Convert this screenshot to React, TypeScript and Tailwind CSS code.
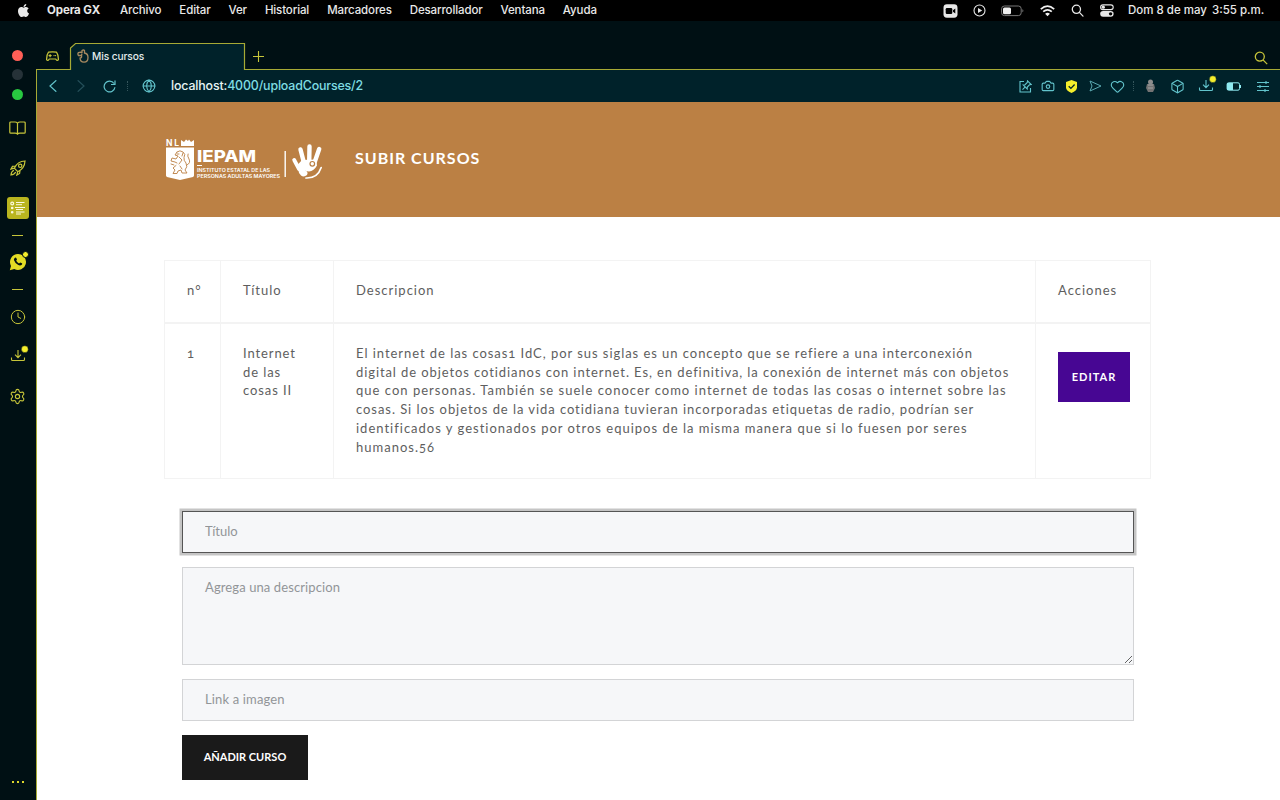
import React from "react";
import {
  Clock, Settings, Camera, Heart, Box, Globe,
} from "lucide-react";
import { FaApple } from "react-icons/fa";

const menus = ["Archivo", "Editar", "Ver", "Historial", "Marcadores", "Desarrollador", "Ventana", "Ayuda"];

const description = [
  { text: "El internet de las cosas1 IdC, por sus siglas es un concepto que se refiere a una interconexión", cls: "tracking-[0.95px]" },
  { text: "digital de objetos cotidianos con internet. Es, en definitiva, la conexión de internet más con objetos", cls: "tracking-[0.91px]" },
  { text: "que con personas. También se suele conocer como internet de todas las cosas o internet sobre las", cls: "tracking-[1.02px]" },
  { text: "cosas. Si los objetos de la vida cotidiana tuvieran incorporadas etiquetas de radio, podrían ser", cls: "tracking-[0.94px]" },
  { text: "identificados y gestionados por otros equipos de la misma manera que si lo fuesen por seres", cls: "tracking-[1px]" },
  { text: "humanos.56", cls: "tracking-[1px]" },
];

function MenuBar() {
  return (
    <header className="flex h-[21px] shrink-0 items-center bg-black text-[11.5px] font-medium leading-none text-[#e8e8e8]">
      <FaApple className="ml-[16px] size-[15px]" />
      <span className="ml-[16px] w-[55px] whitespace-nowrap font-bold tracking-[-0.1px]">Opera GX</span>
      <nav className="ml-[18px] flex gap-[18px] tracking-[-0.12px]">
        {menus.map((m) => <span key={m}>{m}</span>)}
      </nav>
      <div className="ml-auto flex items-center">
        <svg className="h-[14px] w-[15px]" viewBox="0 0 15 14">
          <rect x=".5" y=".3" width="14" height="13.4" rx="3.4" fill="#e8e8e8" />
          <rect x="2.7" y="4" width="6.6" height="6" rx="1.2" fill="#000" />
          <path d="M10 6.2 12.3 4.4v5.2L10 7.8z" fill="#000" />
        </svg>
        <svg className="ml-[15px] size-[13px]" viewBox="0 0 13 13">
          <circle cx="6.5" cy="6.5" r="5.5" fill="none" stroke="#e8e8e8" strokeWidth="1.1" />
          <path d="M5 3.9 9.2 6.5 5 9.1z" fill="#e8e8e8" />
        </svg>
        <svg className="ml-[15px] h-[12px] w-[23px]" viewBox="0 0 23 12">
          <rect x=".6" y="1" width="19.6" height="9.6" rx="2.8" fill="none" stroke="#777" strokeWidth="1" />
          <rect x="2" y="2.4" width="8" height="6.8" rx="1.5" fill="#f0f0f0" />
          <path d="M21.4 4.3q1 .4 1 1.5t-1 1.5z" fill="#777" />
        </svg>
        <svg className="ml-[16px] h-[12px] w-[15px]" viewBox="0 0 15 12" fill="none" stroke="#f0f0f0" strokeWidth="1.7">
          <path d="M.8 4.1Q7.5-1.9 14.2 4.1" />
          <path d="M3.2 6.7Q7.5 2.9 11.8 6.7" />
          <path d="M5.1 8.7Q7.5 6.8 9.9 8.7L7.5 11.3z" fill="#f0f0f0" stroke="none" />
        </svg>
        <svg className="ml-[16px] size-[13px]" viewBox="0 0 13 13" fill="none" stroke="#e8e8e8" strokeWidth="1.3">
          <circle cx="5.4" cy="5.3" r="4.1" /><path d="m8.4 8.4 3.6 3.7" strokeLinecap="round" />
        </svg>
        <svg className="ml-[16px] h-[13px] w-[14px]" viewBox="0 0 14 13">
          <rect x=".6" y=".9" width="12.6" height="4.7" rx="2.35" fill="none" stroke="#e8e8e8" strokeWidth="1.1" />
          <circle cx="3.3" cy="3.2" r="1.6" fill="#e8e8e8" />
          <rect x=".2" y="7" width="13.4" height="5.7" rx="2.85" fill="#e8e8e8" />
          <circle cx="10.6" cy="9.85" r="1.7" fill="#000" />
        </svg>
        <span className="ml-[14px] w-[82px] whitespace-nowrap">Dom 8 de may</span>
        <span className="mr-[16px] ml-[2px] w-[52px] whitespace-nowrap">3:55 p.m.</span>
      </div>
    </header>
  );
}

function TrayDownload({ color, bg }: { color: string; bg: string }) {
  return (
    <svg className="h-[18px] w-[19px] shrink-0" viewBox="0 0 19 18" fill="none" stroke={color} strokeWidth="1.1">
      <path d="M1.5 12.5v2q0 1 1 1h11q1 0 1-1v-2M8 5v7.400M5 9.600l3 3 3-3" />
      <circle cx="14.800" cy="4.200" r="3.400" fill="#f5ee2c" stroke={bg} strokeWidth=".4" />
    </svg>
  );
}

function Sidebar() {
  return (
    <aside className="flex w-[36px] shrink-0 flex-col items-center bg-[#001014] pr-px text-[#c6c53a]">
      <div className="mt-[29px] size-[11px] shrink-0 rounded-full bg-[#ff5f57]" />
      <div className="mt-[8px] size-[11px] shrink-0 rounded-full bg-[#263238]" />
      <div className="mt-[9px] size-[11px] shrink-0 rounded-full bg-[#28c840]" />
      <svg className="mt-[21px] h-[14px] w-[17px]" viewBox="0 0 17 14" fill="none" stroke="currentColor" strokeWidth="1.2">
        <path d="M8.5 2.2v11M8.5 2.2Q7.5 1 6 1H1.8q-1 0-1 1v9.3q0 .9 1 .9H6q1.7 0 2.5 1 .8-1 2.5-1h4.200q1 0 1-.9V2q0-1-1-1H11Q9.500 1 8.500 2.200" />
      </svg>
      <svg className="mt-[25px] size-[16px]" viewBox="0 0 16 16" fill="none" stroke="currentColor" strokeWidth="1.2">
        <path d="M4.300 8.200Q7.500 1.300 15 1q-.300 7.500-7.200 10.700zM5.500 6 2.500 6.400.900 9.200l3.400-1M10 10.500 9.600 13.500 6.800 15.100l1-3.400M3.900 10.300Q1.200 11.500 1 15q3.500-.200 4.700-2.900M4.300 8.200l3.500 3.500" />
        <circle cx="10.200" cy="5.800" r="1.700" />
      </svg>
      <div className="mt-[21px] flex size-[22px] items-center justify-center rounded-[3px] bg-[#b9b51f]">
        <svg className="h-[14px] w-[16px]" viewBox="0 0 16 14" fill="none" stroke="#fbfae0" strokeWidth="1.2">
          <circle cx="2.200" cy="2.500" r="1.400" /><circle cx="2.200" cy="7" r=".7" /><circle cx="2.200" cy="11.300" r=".7" />
          <path d="M6 1.500h8.500M6 3.700h6M5 6.500h10M6 8.500h7M6 11h8.500M6 13h5" strokeWidth="1" />
        </svg>
      </div>
      <div className="mt-[16px] h-px w-[11px] bg-[#c6c53a]" />
      <div className="relative mt-[16px] flex h-[20px] w-[18px] items-center justify-center">
        <svg className="size-[18px]" viewBox="0 0 18 18">
          <path d="M9 1a8 8 0 1 1-3.700 15.100L.800 17.200 2 12.900A8 8 0 0 1 9 1z" fill="#e3dc25" />
          <path d="M6 4.800q.8-.6 1.300.3l.7 1.500-.8 1.200q1 1.800 2.800 2.600l1.200-1 1.700.8q.7.400.100 1.200-1.400 1.600-3.700.600Q5.900 10.300 4.900 7q-.100-1.300 1.100-2.200z" fill="#001014" />
        </svg>
        <span className="absolute -top-[1px] -right-[2px] size-[7px] rounded-full border border-[#001014] bg-[#f5ee2c]" />
      </div>
      <div className="mt-[17px] h-px w-[11px] bg-[#c6c53a]" />
      <Clock className="mt-[19px] size-[16px]" strokeWidth={1.5} />
      <div className="mt-[20px] ml-[3px]"><TrayDownload color="#c6c53a" bg="#001014" /></div>
      <Settings className="mt-[25px] size-[17px]" strokeWidth={1.6} />
      <div className="mt-auto mb-[17px] flex gap-[3px]">
        <i className="size-[2px] bg-[#dcd62c]" /><i className="size-[2px] bg-[#dcd62c]" /><i className="size-[2px] bg-[#dcd62c]" />
      </div>
    </aside>
  );
}

function Tabs() {
  return (
    <div className="relative h-[49px] bg-[#001014]">
      <svg className="absolute inset-0 h-[49px] w-[1244px]" viewBox="0 0 1244 49" fill="none">
        <path d="M34.500 49V27L39.500 22h169V49z" fill="#00222a" />
        <path d="M.500 49v-.500h34V27L39.500 22.500h169v26h1036" stroke="#a7aa35" strokeWidth="1.200" />
      </svg>
      <div className="relative flex h-[48px] items-center pt-[22px] text-[#c6c53a]">
        <svg className="ml-[10px] h-[11px] w-[13px]" viewBox="0 0 13 11" fill="none" stroke="currentColor" strokeWidth="1.200">
          <path d="M2.500 1.200q4-.800 8 0Q12.500 4 12.400 8.600q-1.200 2-2.700-.600H3.300Q1.800 10.600.600 8.600.500 4 2.500 1.200z" />
          <path d="M3 4.600h2.200M4.100 3.500v2.200M8 4.600h.1M9.500 4.600h.1" strokeLinecap="round" />
        </svg>
        <svg className="ml-[18px] h-[14px] w-[12px]" viewBox="0 0 12 14" fill="none" stroke="#a78a60" strokeWidth="1.300">
          <path d="M5 4V1.500q1.500-1 2.500 0V4q3.500.500 3.500 4.500 0 4.500-4 4.700-4-.200-4-4.700M5 4.500 4.500 6.500h-3Q.300 5 1.500 3.500L5 3M4.500 6.500Q5 9 3 9" />
        </svg>
        <span className="ml-[3px] w-[152px] text-[10.200px] leading-none font-medium tracking-[-0.1px] text-[#e4eded]">Mis cursos</span>
        <svg className="ml-[9px] size-[11px]" viewBox="0 0 11 11" stroke="currentColor" strokeWidth="1.100"><path d="M5.500 0v11M0 5.500h11" /></svg>
        <svg className="mr-[12px] ml-auto size-[14px] translate-y-[2px]" viewBox="0 0 14 14" fill="none" stroke="currentColor" strokeWidth="1.300"><circle cx="5.800" cy="5.600" r="4.500" /><path d="m9 8.900 4.200 4.200" /></svg>
      </div>
    </div>
  );
}

function Toolbar() {
  return (
    <div className="flex h-[32px] items-center border-l border-[#a7aa35] bg-[#00222a] text-[#62c4cc]">
      <svg className="ml-[12px] h-[12px] w-[8px]" viewBox="0 0 8 12" fill="none" stroke="#62c4cc" strokeWidth="1.200"><path d="M7.300.300 1 6l6.300 5.700" /></svg>
      <svg className="ml-[20px] h-[12px] w-[8px]" viewBox="0 0 8 12" fill="none" stroke="#24505a" strokeWidth="1.200"><path d="M.700.300 7 6 .700 11.700" /></svg>
      <svg className="ml-[18px] size-[13px]" viewBox="0 0 13 13" fill="none" stroke="#62c4cc" strokeWidth="1.200"><path d="M11 3.500A5.400 5.400 0 1 0 11.900 7.200M12 .500v4H8" /></svg>
      <span className="ml-[11px] h-[10px] border-l border-dotted border-[#35565c]" />
      <Globe className="ml-[14px] size-[14px]" strokeWidth={1.900} />
      <span className="ml-[15px] text-[12.400px] leading-none font-medium tracking-[-0.150px] text-[#7fdde3]"><span className="text-[#e6f4f4]">localhost:</span>4000/uploadCourses/2</span>
      <div className="mr-[11px] ml-auto flex items-center">
        <svg className="size-[13px]" viewBox="0 0 13 13" fill="none" stroke="currentColor" strokeWidth="1.100">
          <path d="M5 1.500H1v10.500h10.500V8" /><path d="m8.500.800 3.700 3.700-1.700.300-2.200 2.300-.100 1.800-4-4 1.900-.200 2.200-2.200zM6 7.200 3.500 9.600" />
        </svg>
        <Camera className="ml-[9px] size-[14px]" strokeWidth={1.900} />
        <svg className="ml-[10px] size-[13px]" viewBox="0 0 13 13"><path d="M6.500 0 12 2v5.500q0 3-5.500 5.500Q1 10.500 1 7.500V2z" fill="#f5ee2c" /><path d="m3.700 6.200 2.200 2.200 3.700-3.900" fill="none" stroke="#00222a" strokeWidth="1.300" /></svg>
        <svg className="ml-[11px] h-[12px] w-[13px]" viewBox="0 0 13 12" fill="none" stroke="#5ba9b1"><path d="m1 1 11 5L1 11l2-5z" /></svg>
        <Heart className="ml-[8px] size-[15px]" strokeWidth={1.800} />
        <span className="ml-[8px] h-[10px] border-l border-dotted border-[#35565c]" />
        <svg className="ml-[11px] h-[14px] w-[11px]" viewBox="0 0 11 14"><circle cx="5.500" cy="3" r="2.500" fill="#8c8c8c" /><path d="M2 5h7l1 4-2 4H3L1 9z" fill="#737373" /><path d="M3 6h5M3 9h5" stroke="#a5a5a5" /></svg>
        <Box className="ml-[14px] size-[15px]" strokeWidth={1.700} />
        <div className="mt-[-5px] ml-[13px]"><TrayDownload color="#62c4cc" bg="#00222a" /></div>
        <svg className="ml-[9px] h-[9px] w-[16px]" viewBox="0 0 16 9"><rect x="1.100" y=".800" width="12.400" height="7.400" rx="1.500" fill="none" stroke="#8feaf0" /><path d="M1 1h6v7H1z" fill="#8feaf0" /><path d="M14.500 3v3" stroke="#8feaf0" /></svg>
        <svg className="ml-[15px] h-[11px] w-[12px]" viewBox="0 0 12 11" stroke="#62c4cc" strokeWidth="1.100"><path d="M0 1.500h12M0 5.500h12M0 9.500h12M9 0v3M3 4v3M8 8v3" /></svg>
      </div>
    </div>
  );
}

function Logo() {
  return (
    <svg className="-mt-[2px] h-[42px] w-[158px]" viewBox="0 0 158 42" fill="#fff" fontFamily="Inter, sans-serif">
      <text x="1" y="8" fontSize="8.500" fontWeight="700" textLength="13">NL</text>
      <path d="M16 8V2l3 2 2-2.500 2 1.500 1-1.500 2 2.500 3-2v6z" />
      <path d="M1 9.500h28v28q0 1-1 1.400L15 42 2 38.900q-1-.400-1-1.400z" />
      <g fill="none" stroke="#bb8044" strokeWidth=".9" strokeLinecap="round">
        <path d="M12 14q3-2.500 6 0 3 2 1 5.500-.500 3 2 5.500 2 4-1 7l2 3h-5l-1-3-3 1-1 2.500H8l2-3.500-2-2 3-2.500" />
        <path d="M12 14l-2 3 3 1-2 3-4-1-1 3 4 1 2 1M14 19l3 3-3 4M22 27q4-2 2-6-2-3-1-5M6 26l3 1M15 28l2 3M12 16h2M18 15l-1 3" />
      </g>
      <text x="32" y="24" fontSize="16" fontWeight="800" textLength="59" lengthAdjust="spacingAndGlyphs">IEPAM</text>
      <path d="M32 27h5v1h-5z" />
      <text x="32" y="34.200" fontSize="4.800" fontWeight="600" textLength="73" lengthAdjust="spacingAndGlyphs">INSTITUTO ESTATAL DE LAS</text>
      <text x="32" y="40" fontSize="4.800" fontWeight="600" textLength="83" lengthAdjust="spacingAndGlyphs">PERSONAS ADULTAS MAYORES</text>
      <path d="M119.500 13h1.400v26h-1.400z" />
      <g fill="none" stroke="#fff" strokeLinecap="round">
        <path d="M129.200 22 134 31" strokeWidth="3.800" />
        <path d="M135.500 11.500 139 25M144.500 8.500 144.200 24M154.200 11 149 26" strokeWidth="4.400" />
      </g>
      <path d="M131.500 28 137 22l14-.500 1 6q-3 5.500-8 6-2 0-4-1-4-1-6 1z" />
      <path d="M133.500 32.500q5-2 8 .500 2 2 .500 4-3 2.500-6 .500-2.500-2-2.500-5z" />
      <path d="M156.200 29.500Q152.500 40.500 141 40" fill="none" stroke="#fff" strokeWidth="1.700" strokeLinecap="round" />
      <circle cx="147.300" cy="25.800" r="2.300" fill="none" stroke="#bb8044" strokeWidth="1.200" />
    </svg>
  );
}

function CoursesTable() {
  const cell = "border-r border-[#f3f3f3] pl-[22px]";
  return (
    <section className="ml-[128px] grid w-[987px] grid-cols-[56px_113px_702px_115px] border-t border-l border-[#f3f3f3] text-[13px] leading-[18.700px] text-[#5e5e5e] oldstyle-nums">
      <div className={`${cell} h-[63px] border-b-2 pt-[20px] tracking-[1px]`}>n°</div>
      <div className={`${cell} border-b-2 pt-[20px] tracking-[1px]`}>Título</div>
      <div className={`${cell} border-b-2 pt-[20px] tracking-[1px]`}>Descripcion</div>
      <div className={`${cell} border-b-2 pt-[20px] tracking-[1px]`}>Acciones</div>
      <div className={`${cell} h-[155px] border-b pt-[20px]`}>1</div>
      <div className={`${cell} border-b pt-[20px] tracking-[0.900px]`}>Internet<br />de las<br />cosas II</div>
      <div className={`${cell} border-b pt-[20px]`}>
        {description.map((l) => <div key={l.text} className={`whitespace-nowrap ${l.cls}`}>{l.text}</div>)}
      </div>
      <div className={`${cell} border-b pt-[28px]`}>
        <button className="h-[50px] w-[72px] bg-[#470693] text-[11px] font-bold tracking-[1px] text-white">EDITAR</button>
      </div>
    </section>
  );
}

function CourseForm() {
  const field = "block w-[952px] border border-[#d3d4d6] bg-[#f6f7f9] px-[22px] pb-[2px] text-[13px] placeholder-[#929598] outline-none";
  return (
    <form className="mt-[32px] ml-[146px]" onSubmit={(e) => e.preventDefault()}>
      <input placeholder="Título" className={`${field} h-[42px] border-[#555555]! ring-[2.500px] ring-[#c5c5c5]`} />
      <textarea placeholder="Agrega una descripcion" className={`${field} mt-[14px] h-[98px] resize pt-[10px] tracking-[0.100px]`} />
      <input placeholder="Link a imagen" className={`${field} mt-[14px] h-[42px] tracking-[0.150px]`} />
      <button className="mt-[14px] h-[45px] w-[126px] bg-[#1a1a1a] text-[11px] font-bold text-white">AÑADIR CURSO</button>
    </form>
  );
}

export default function App() {
  return (
    <div className="flex h-[800px] w-[1280px] flex-col overflow-hidden bg-white font-['Inter',sans-serif]">
      <MenuBar />
      <div className="flex min-h-0 flex-1">
        <Sidebar />
        <div className="flex w-[1244px] flex-col">
          <Tabs />
          <Toolbar />
          <main className="flex-1 border-l border-[#a7aa35] bg-white font-['Lato',sans-serif]">
            <div className="flex h-[115px] items-center bg-[#bb8044] pl-[128px]">
              <Logo />
              <h1 className="-mt-[4px] ml-[32px] text-[16px] font-bold tracking-[1px] text-white">SUBIR CURSOS</h1>
            </div>
            <div className="-ml-px pt-[43px]">
              <CoursesTable />
              <CourseForm />
            </div>
          </main>
        </div>
      </div>
    </div>
  );
}
